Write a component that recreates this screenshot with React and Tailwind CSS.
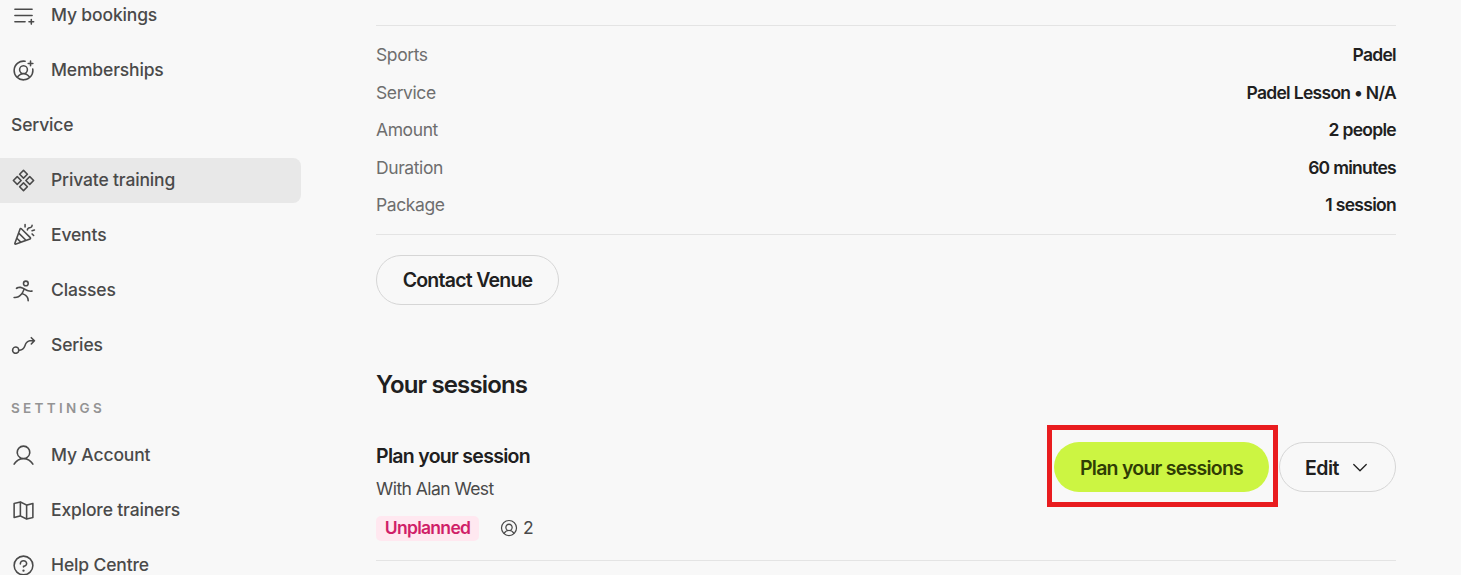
import React from 'react';
import {
  PiCaretDown,
  PiConfetti,
  PiDiamondsFour,
  PiFlowArrow,
  PiListPlus,
  PiMapTrifold,
  PiPersonSimpleRun,
  PiQuestion,
  PiUser,
  PiUserCircle,
  PiUserCirclePlus,
} from 'react-icons/pi';

const details = [
  { label: 'Sports', value: 'Padel' },
  { label: 'Service', value: 'Padel Lesson • N/A' },
  { label: 'Amount', value: '2 people' },
  { label: 'Duration', value: '60 minutes' },
  { label: 'Package', value: '1 session' },
];

function NavItem({ icon: Icon, label, active }) {
  return (
    <a
      className={`flex h-[45px] shrink-0 items-center gap-[15px] rounded-r-lg pl-[11px] ${active ? 'bg-[#e8e8e8]' : ''}`}
    >
      {Icon && <Icon size={25} className="shrink-0" />}
      <span className="whitespace-nowrap">{label}</span>
    </a>
  );
}

function Sidebar() {
  return (
    <nav className="-mt-[7px] flex w-[301px] shrink-0 flex-col gap-[10px] text-[17.5px] font-medium tracking-[-0.15px] text-[#4a4a4a]">
      <NavItem icon={PiListPlus} label="My bookings" />
      <NavItem icon={PiUserCirclePlus} label="Memberships" />
      <NavItem label="Service" />
      <NavItem icon={PiDiamondsFour} label="Private training" active />
      <NavItem icon={PiConfetti} label="Events" />
      <NavItem icon={PiPersonSimpleRun} label="Classes" />
      <NavItem icon={PiFlowArrow} label="Series" />
      <h3 className="flex h-[45px] shrink-0 items-center pt-[15px] pl-[11px] text-[13.5px] font-semibold tracking-[3.3px] text-[#949494]">
        SETTINGS
      </h3>
      <NavItem icon={PiUser} label="My Account" />
      <NavItem icon={PiMapTrifold} label="Explore trainers" />
      <NavItem icon={PiQuestion} label="Help Centre" />
    </nav>
  );
}

function Details() {
  return (
    <dl className="mt-[25px] flex h-[210px] flex-col border-y border-[#e4e4e4] pt-[10.5px] text-[17.5px]">
      {details.map((item) => (
        <div key={item.label} className="flex h-[37.5px] items-center justify-between">
          <dt className="tracking-[-0.4px] text-[#6e6e6e]">{item.label}</dt>
          <dd className="font-semibold tracking-[-0.7px]">{item.value}</dd>
        </div>
      ))}
    </dl>
  );
}

function Session() {
  return (
    <div className="mt-[36px] flex h-[126px] justify-between border-b border-[#e4e4e4]">
      <div className="pt-[6px]">
        <h3 className="text-[19.5px] leading-[30px] font-semibold tracking-[-0.7px]">Plan your session</h3>
        <p className="mt-[5px] text-[17.5px] leading-[26px] tracking-[-0.55px] text-[#4a4a4a]">With Alan West</p>
        <div className="mt-[13px] flex items-center">
          <span className="flex h-[25px] w-[103px] items-center justify-center rounded-[5px] bg-[#ffe8f0] text-[17.5px] font-semibold tracking-[-0.7px] text-[#d01e68]">
            Unplanned
          </span>
          <PiUserCircle size={20} className="ml-[20px] text-[#4a4a4a]" />
          <span className="ml-[4px] text-[17.5px] text-[#4a4a4a]">2</span>
        </div>
      </div>
      <div className="flex gap-[10px] pt-[7px]">
        <div className="relative h-[50px]">
          <button className="h-[50px] w-[215px] rounded-full bg-[#ccf542] pt-[3px] text-[19.5px] font-semibold tracking-[-0.75px] text-[#303d05]">
            Plan your sessions
          </button>
          <div className="pointer-events-none absolute -top-[17px] -right-[9px] h-[82px] w-[231px] border-5 border-[#e91c1f]" />
        </div>
        <button className="flex h-[50px] w-[117px] items-center justify-center gap-[11px] rounded-full border border-[#d6d6d6] text-[19.5px] font-semibold tracking-[-0.5px]">
          <span className="pt-[3px]">Edit</span>
          <PiCaretDown size={20} />
        </button>
      </div>
    </div>
  );
}

export default function App() {
  return (
    <div className="flex h-[575px] w-[1461px] overflow-hidden bg-[#f8f8f8] font-[Inter,sans-serif] text-[#202020]">
      <Sidebar />
      <main className="ml-[75px] w-[1020px] shrink-0">
        <Details />
        <button className="mt-[20px] h-[50px] w-[183px] rounded-full border border-[#d6d6d6] pt-[2px] text-[19.5px] font-semibold tracking-[-0.75px]">
          Contact Venue
        </button>
        <h2 className="mt-[65px] text-[24px] leading-[29px] font-semibold tracking-[-0.85px]">Your sessions</h2>
        <Session />
      </main>
    </div>
  );
}
